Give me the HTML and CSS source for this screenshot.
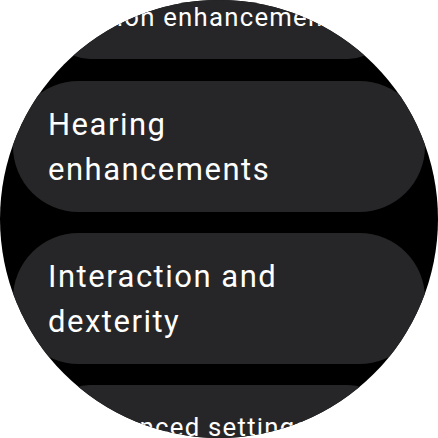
FILE: index.html
```html
<!DOCTYPE html>
<html lang="en">
<head>
<meta charset="utf-8">
<title>Accessibility</title>
<link rel="stylesheet" href="styles.css">
</head>
<body>
<div class="watch">
  <div class="list">
    <div class="chip chip-top">Vision enhancements</div>
    <div class="chip">Hearing enhancements</div>
    <div class="chip">Interaction and dexterity</div>
    <div class="chip chip-bottom">Advanced settings</div>
  </div>
</div>
</body>
</html>
```

FILE: styles.css
```css
html, body {
  margin: 0;
  padding: 0;
  background: #ffffff;
}

.watch {
  width: 438px;
  height: 438px;
  border-radius: 50%;
  overflow: hidden;
  background: #000000;
}

.list {
  display: flex;
  flex-direction: column;
  gap: 21px;
  padding: 0 13px;
  margin-top: -42px;
}

.chip {
  background: #262628;
  color: #ffffff;
  border-radius: 999px;
  padding: 21px 60px 20px 35px;
  font-family: Roboto, "Noto Sans", sans-serif;
  font-size: 31px;
  line-height: 45px;
  letter-spacing: 1.5px;
}

.chip-top,
.chip-bottom {
  white-space: nowrap;
  padding-top: 28px;
  padding-bottom: 28px;
  transform: scale(0.83);
}

.chip-top {
  transform-origin: 50% 100%;
  margin-bottom: 1px;
}

.chip-bottom {
  transform-origin: 50% 0;
}
```
